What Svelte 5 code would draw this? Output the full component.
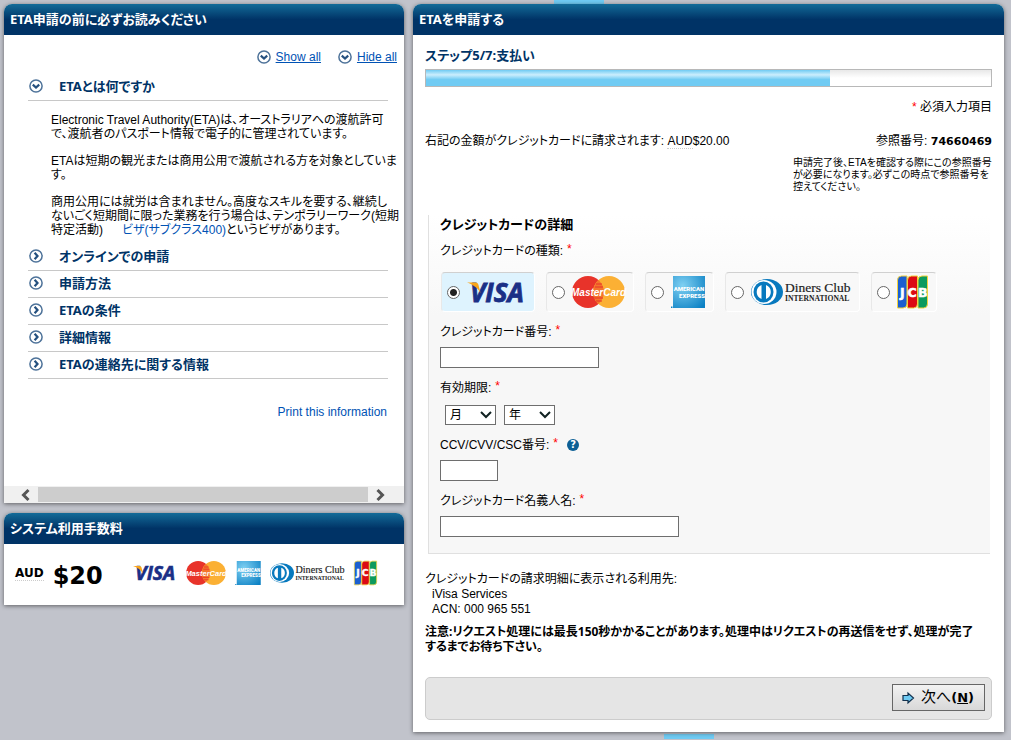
<script lang="ts">
    const topics = [
        "オンラインでの申請",
        "申請方法",
        "ETAの条件",
        "詳細情報",
        "ETAの連絡先に関する情報",
    ];

    const cards = [
        { id: "visa", name: "Visa", width: 59 },
        { id: "mastercard", name: "MasterCard", width: 53 },
        { id: "amex", name: "American Express", width: 34 },
        { id: "diners", name: "Diners Club International", width: 100 },
        { id: "jcb", name: "JCB", width: 31 },
    ];

    const step = 5;
    const totalSteps = 7;

    let cardType = $state("visa");
    let progress = $derived((step / totalSteps) * 100);
</script>

{#snippet chevron(open: boolean)}
    <svg class="chevron" viewBox="0 0 14 14" aria-hidden="true">
        <circle cx="7" cy="7" r="6.1" fill="#fff" stroke="#4d7299" stroke-width="1.5" />
        {#if open}
            <path d="M3.8 5.6 7 8.5l3.2-2.900" fill="none" stroke="#24507f" stroke-width="2.2" />
        {:else}
            <path d="M5.6 3.8 8.5 7l-2.900 3.2" fill="none" stroke="#24507f" stroke-width="2.2" />
        {/if}
    </svg>
{/snippet}

{#snippet logo(card: { id: string; width: number }, height: number)}
    <svg width={Math.round((card.width * height) / 32)} {height} viewBox="0 0 {card.width} 32" aria-hidden="true">
        {#if card.id === "visa"}
            <text x="3" y="26" font-family="Open Sans" font-size="26" font-weight="700" font-style="italic" fill="#1a2f86" stroke="#1a2f86" stroke-width="0.8">VISA</text>
            <path d="M0 6.500h8.500c2 0 2.500 1 3 2.500l2 8C11 12 6 8.500 0 6.500z" fill="#f9a51a" />
        {:else if card.id === "mastercard"}
            <circle cx="16" cy="16" r="16" fill="#e8332a" />
            <circle cx="37" cy="16" r="16" fill="#fbb034" />
            <path d="M26.500 4a16 16 0 0 1 0 24a16 16 0 0 1 0-24z" fill="#f4742c" />
            <path d="M24 8h6M23 11h8M22 22h9M24 25h6" stroke="#e8332a" stroke-width="1" />
            <text x="26.500" y="20" text-anchor="middle" font-family="Liberation Sans" font-size="10" font-weight="700" font-style="italic" fill="#fff">MasterCard</text>
        {:else if card.id === "amex"}
            <defs>
                <radialGradient id="amex-{height}" cx="0.3" cy="0.3" r="0.9">
                    <stop offset="0" stop-color="#7fd0f2" />
                    <stop offset="1" stop-color="#0c81c4" />
                </radialGradient>
            </defs>
            <rect x="2" width="32" height="32" fill="url(#amex-{height})" />
            <path d="M0 30.500h1.500v1.500H0z" fill="#0c81c4" />
            <text x="18" y="14.500" text-anchor="middle" font-family="Roboto" font-size="6" font-weight="900" fill="#fff">AMERICAN</text>
            <text x="21" y="21.500" text-anchor="middle" font-family="Roboto" font-size="6" font-weight="900" fill="#fff">EXPRESS</text>
        {:else if card.id === "diners"}
            <ellipse cx="16" cy="16" rx="16" ry="13" fill="#0779be" />
            <ellipse cx="13" cy="16" rx="12.500" ry="12" fill="#fff" />
            <ellipse cx="12.500" cy="16" rx="10" ry="10.500" fill="#0779be" />
            <path d="M10.500 9v14a7.500 7.500 0 0 1 0-14zM15 9v14a7.500 7.500 0 0 0 0-14z" fill="#fff" />
            <text x="34" y="15.500" font-family="Liberation Serif" font-size="13.5" fill="#222" stroke="#222" stroke-width="0.2">Diners Club</text>
            <text x="34" y="25" font-family="Liberation Serif" font-size="7.6" font-weight="700" fill="#222">INTERNATIONAL</text>
        {:else}
            <path d="M.5 4a4 4 0 0 1 4-4H10v28a4 4 0 0 1-4 4H.5z" fill="#1b5fd0" stroke="#f2d23c" />
            <path d="M10.500 4a4 4 0 0 1 4-4h6v28a4 4 0 0 1-4 4h-6z" fill="#dc0a14" stroke="#f2d23c" />
            <path d="M21 4a4 4 0 0 1 4-4h5.500v28a4 4 0 0 1-4 4H21z" fill="#0c9a5e" stroke="#f2d23c" />
            <text x="3 10.500 21" y="20.500" font-family="DejaVu Sans" font-size="12.5" font-weight="700" fill="#fff" stroke="#fff" stroke-width="0.5">JCB</text>
        {/if}
    </svg>
{/snippet}

<div class="page">
    <div class="strip top"><span></span></div>

    <div class="columns">
        <aside>
            <section class="panel">
                <h2>ETA申請の前に必ずお読みください</h2>
                <div class="info">
                    <div class="toggles">
                        <a href="#show">{@render chevron(true)}<span>Show all</span></a>
                        <a href="#hide">{@render chevron(true)}<span>Hide all</span></a>
                    </div>

                    <h3><button type="button">{@render chevron(true)}ETAとは何ですか</button></h3>
                    <div class="answer">
                        <p>
                            Electronic Travel Authority(ETA)は、オーストラリアへの渡航許可<br />
                            で、渡航者のパスポート情報で電子的に管理されています。
                        </p>
                        <p>
                            ETAは短期の観光または商用公用で渡航される方を対象としていま<br />
                            す。
                        </p>
                        <p>
                            商用公用には就労は含まれません。高度なスキルを要する、継続し<br />
                            ないごく短期間に限った業務を行う場合は、テンポラリーワーク(短期<br />
                            特定活動)<a href="#visa400">ビザ(サブクラス400)</a>というビザがあります。
                        </p>
                    </div>

                    {#each topics as topic}
                        <h3><button type="button">{@render chevron(false)}{topic}</button></h3>
                    {/each}

                    <a class="print" href="#print">Print this information</a>
                </div>
                <div class="scrollbar">
                    <button class="left" type="button" aria-label="Scroll left">
                        <svg viewBox="0 0 10 12"><path d="M8.500 1 3.500 6l5 5" /></svg>
                    </button>
                    <div class="thumb"></div>
                    <button type="button" aria-label="Scroll right">
                        <svg viewBox="0 0 10 12"><path d="M1.500 1l5 5-5 5" /></svg>
                    </button>
                </div>
            </section>

            <section class="panel">
                <h2>システム利用手数料</h2>
                <div class="fee">
                    <abbr>AUD</abbr>
                    <strong>$20</strong>
                    <div class="logos">
                        {#each cards as card}
                            {@render logo(card, 24)}
                        {/each}
                    </div>
                </div>
            </section>
        </aside>

        <main class="panel">
            <h2>ETAを申請する</h2>
            <form class="apply">
                <h4>ステップ5/7:支払い</h4>
                <div class="progress"><div class="bar" style="width: {progress}%"></div></div>
                <p class="required"><em>*</em> 必須入力項目</p>

                <div class="summary">
                    <p>右記の金額がクレジットカードに請求されます: <abbr>AUD</abbr>$20.00</p>
                    <p>参照番号: <b>74660469</b></p>
                </div>
                <p class="note">
                    申請完了後、ETAを確認する際にこの参照番号<br />
                    が必要になります。必ずこの時点で参照番号を<br />
                    控えてください。
                </p>

                <div class="details" role="group" aria-labelledby="details-title">
                    <h5 id="details-title">クレジットカードの詳細</h5>

                    <div class="field">
                        <span class="label" id="type-label">クレジットカードの種類:<em>*</em></span>
                        <div class="cards" role="radiogroup" aria-labelledby="type-label">
                            {#each cards as card}
                                <label class="card" class:selected={cardType === card.id}>
                                    <input type="radio" name="card" value={card.id} aria-label={card.name} bind:group={cardType} />
                                    {@render logo(card, 32)}
                                </label>
                            {/each}
                        </div>
                    </div>

                    <div class="field">
                        <label class="label" for="number">クレジットカード番号:<em>*</em></label>
                        <input class="text medium" id="number" type="text" />
                    </div>

                    <div class="field">
                        <label class="label" for="month">有効期限:<em>*</em></label>
                        <div class="expiry">
                            <select id="month"><option>月</option></select>
                            <select aria-label="年"><option>年</option></select>
                        </div>
                    </div>

                    <div class="field">
                        <div class="label">
                            <label class="label" for="ccv">CCV/CVV/CSC番号:<em>*</em></label>
                            <button class="help" type="button" aria-label="CCV/CVV/CSC">?</button>
                        </div>
                        <input class="text short" id="ccv" type="text" />
                    </div>

                    <div class="field">
                        <label class="label" for="holder">クレジットカード名義人名:<em>*</em></label>
                        <input class="text long" id="holder" type="text" />
                    </div>
                </div>

                <p class="merchant">クレジットカードの請求明細に表示される利用先:</p>
                <address>iVisa Services<br />ACN: 000 965 551</address>
                <p class="warning">
                    注意:リクエスト処理には最長150秒かかることがあります。処理中はリクエストの再送信をせず、処理が完了<br />
                    するまでお待ち下さい。
                </p>

                <div class="actions">
                    <button class="next" type="button">
                        <svg viewBox="0 0 13 12" aria-hidden="true">
                            <path d="M1 3.500h5V1l5.500 5L6 11V8.500H1z" fill="#6ecaf2" stroke="#12324f" stroke-width="1.2" />
                        </svg>
                        <span>次へ<b>(<u>N</u>)</b></span>
                    </button>
                </div>
            </form>
        </main>
    </div>

    <div class="strip bottom"><span></span></div>
</div>

<style>
    :global(body) {
        background: #c1c3cb;
    }

    .page {
        font-family: "Liberation Sans", "Noto Sans CJK JP", sans-serif;
        font-size: 12px;
        line-height: 18px;
        font-feature-settings: "palt";
        color: #000;
    }

    h2, h3, h4, h5, p {
        margin: 0;
    }

    h2, h3, h4, h5 {
        font-family: "Noto Sans", "Noto Sans CJK JP", sans-serif;
        font-size: 13px;
    }

    b, strong {
        font-family: "DejaVu Sans", "Noto Sans CJK JP", sans-serif;
        font-size: 11px;
    }

    em {
        color: #f00;
        font-style: normal;
    }

    abbr {
        border-bottom: 1px dotted #ccc;
    }

    a {
        color: #0052b4;
        text-decoration: none;
    }

    button {
        font: inherit;
        font-feature-settings: inherit;
        color: inherit;
        cursor: pointer;
    }

    svg {
        display: block;
        overflow: visible;
    }

    .strip {
        height: 4px;
    }

    .strip span {
        display: block;
        width: 50px;
        height: 100%;
        background: #70cbf3;
    }

    .strip.top {
        padding-left: 54.8%;
    }

    .strip.bottom {
        height: 5px;
        padding: 2px 0 0 65.7%;
    }

    .columns {
        display: grid;
        grid-template-columns: 400fr 591fr;
        align-items: start;
        gap: 9px;
        padding: 0 7px 0 4px;
    }

    aside {
        display: grid;
        gap: 10px;
        min-width: 0;
    }

    .panel {
        min-width: 0;
        background: #fff;
        border-radius: 8px 8px 0 0;
        box-shadow: 0 1px 4px rgba(0, 0, 0, 0.5);
    }

    .panel h2 {
        height: 31px;
        padding: 0 6px;
        border-radius: 8px 8px 0 0;
        background: linear-gradient(#136b98, #003366 50%);
        color: #fff;
        line-height: 31px;
        white-space: nowrap;
    }

    /* information panel */
    .info {
        display: flex;
        flex-direction: column;
        height: 438px;
        padding: 13px 7px 0 24px;
        white-space: nowrap;
        overflow: hidden;
    }

    .toggles {
        display: flex;
        justify-content: flex-end;
        gap: 17px;
        margin-bottom: 9px;
    }

    .toggles a {
        display: flex;
        align-items: center;
        gap: 5px;
    }

    .toggles span {
        text-decoration: underline;
    }

    .chevron {
        width: 14px;
        height: 14px;
        flex-shrink: 0;
    }

    h3 {
        margin-right: 9px;
        border-bottom: 1px solid #c8c8c8;
    }

    h3 button {
        display: flex;
        align-items: center;
        gap: 16px;
        width: 100%;
        padding: 0 0 3px 1px;
        border: 0;
        background: none;
        color: #003366;
        line-height: 22px;
    }

    h3 + h3 {
        margin-top: 1px;
    }

    .answer {
        padding: 12px 0 8px 23px;
        line-height: 14px;
    }

    .answer p + p {
        margin-top: 13px;
    }

    .answer a {
        margin-left: 19px;
    }

    .print {
        align-self: flex-end;
        margin: 24px 10px 0 0;
    }

    .scrollbar {
        display: flex;
        height: 17px;
        padding-right: 2px;
        background: #f0f0f0;
    }

    .scrollbar button {
        display: flex;
        align-items: center;
        width: 34px;
        padding: 0 8px;
        border: 0;
        background: none;
    }

    .scrollbar .left {
        justify-content: flex-end;
    }

    .scrollbar svg {
        width: 10px;
        height: 12px;
        fill: none;
        stroke: #555;
        stroke-width: 3;
    }

    .thumb {
        flex: 1;
        margin: 1px 0;
        background: #cdcdcd;
    }

    /* service fee */
    .fee {
        display: flex;
        align-items: center;
        padding: 11px 27px 14px 11px;
    }

    .fee abbr {
        margin-right: 9px;
        font: bold 12px/14px "DejaVu Sans", sans-serif;
    }

    .fee strong {
        padding-top: 6px;
        font-size: 24px;
        line-height: 30px;
    }

    .logos {
        display: flex;
        flex: 1;
        justify-content: space-between;
        margin-left: 30px;
    }

    /* application form */
    .apply {
        padding: 11px 12px 12px;
        white-space: nowrap;
    }

    h4 {
        color: #003366;
    }

    .progress {
        height: 16px;
        margin: 5px 0 11px;
        border: 1px solid #b8b8b8;
        background: linear-gradient(#e8e8e8, #fff 50%);
    }

    .bar {
        height: 100%;
        background: linear-gradient(#70cbf3, #cbeefd 30%, #70cbf3 60%);
    }

    .required {
        text-align: right;
    }

    .summary {
        display: flex;
        justify-content: space-between;
        margin: 16px 0 6px;
    }

    .note {
        width: 199px;
        margin-left: auto;
        font-size: 10px;
        line-height: 12px;
    }

    .details {
        margin: 22px 2px 18px 3px;
        padding: 0 0 16px 11px;
        border-left: 1px solid #e0e0e0;
        border-bottom: 1px solid #e0e0e0;
        background: linear-gradient(#fff, #f7f7f7 30%);
    }

    h5 {
        margin-bottom: 9px;
    }

    .field {
        display: grid;
        justify-items: start;
        gap: 6px;
    }

    .field + .field {
        margin-top: 11px;
    }

    .label {
        display: flex;
        align-items: center;
    }

    .label em {
        align-self: flex-start;
        margin-left: 4px;
        line-height: 15px;
    }

    .cards {
        display: flex;
        gap: 11px;
        padding: 6px 0 0 1px;
    }

    .card {
        display: flex;
        align-items: center;
        gap: 7px;
        height: 38px;
        padding: 0 8px 0 5px;
        border: 1px solid #fff;
        border-top-color: #d0d0d0;
        border-left-color: #e8e8e8;
        border-radius: 4px;
        background: #f8f8f8;
    }

    .card.selected {
        background: #def3fe;
    }

    .card input {
        appearance: none;
        width: 13px;
        height: 13px;
        margin: 0;
        border: 1px solid #666;
        border-radius: 50%;
        background: #fff;
    }

    .card input:checked {
        background: radial-gradient(#222 0 3px, #fff 4px);
    }

    .text {
        box-sizing: border-box;
        height: 21px;
        border: 1px solid #6e6e6e;
        background: #fff;
    }

    .short {
        width: 58px;
    }

    .medium {
        width: 159px;
    }

    .long {
        width: 239px;
    }

    .expiry {
        display: flex;
        gap: 8px;
        padding: 2px 0 0 5px;
    }

    select {
        appearance: none;
        width: 51px;
        height: 20px;
        padding: 0 4px;
        border: 1px solid #6e6e6e;
        border-radius: 0;
        background: #fff url("data:image/svg+xml,%3Csvg xmlns='http://www.w3.org/2000/svg' width='12' height='8'%3E%3Cpath d='M1 1l5 5 5-5' fill='none' stroke='%23122' stroke-width='2'/%3E%3C/svg%3E") no-repeat right 3px center;
        color: #000;
        font: inherit;
    }

    .help {
        width: 12px;
        height: 12px;
        margin-left: 9px;
        padding: 0;
        border: 0;
        border-radius: 50%;
        background: #0c5f95;
        color: #fff;
        font: bold 10px/12px "DejaVu Sans", sans-serif;
    }

    .merchant, address {
        line-height: 15px;
    }

    address {
        padding-left: 7px;
        font-style: normal;
    }

    .warning {
        margin: 7px 0 23px;
        font-family: "Noto Sans", "Noto Sans CJK JP", sans-serif;
        font-weight: bold;
        line-height: 15px;
    }

    .actions {
        display: flex;
        justify-content: flex-end;
        padding: 6px 6px 8px;
        border: 1px solid #ccc;
        border-radius: 5px;
        background: #e5e5e5;
    }

    .next {
        display: flex;
        align-items: center;
        gap: 6px;
        height: 27px;
        padding: 0 10px 0 9px;
        border: 1px solid #666;
        background: linear-gradient(#f2f2f2, #d8d8d8);
        font-size: 15px;
    }

    .next svg {
        width: 13px;
        height: 12px;
    }

    .next b {
        font-size: 13px;
    }
</style>
